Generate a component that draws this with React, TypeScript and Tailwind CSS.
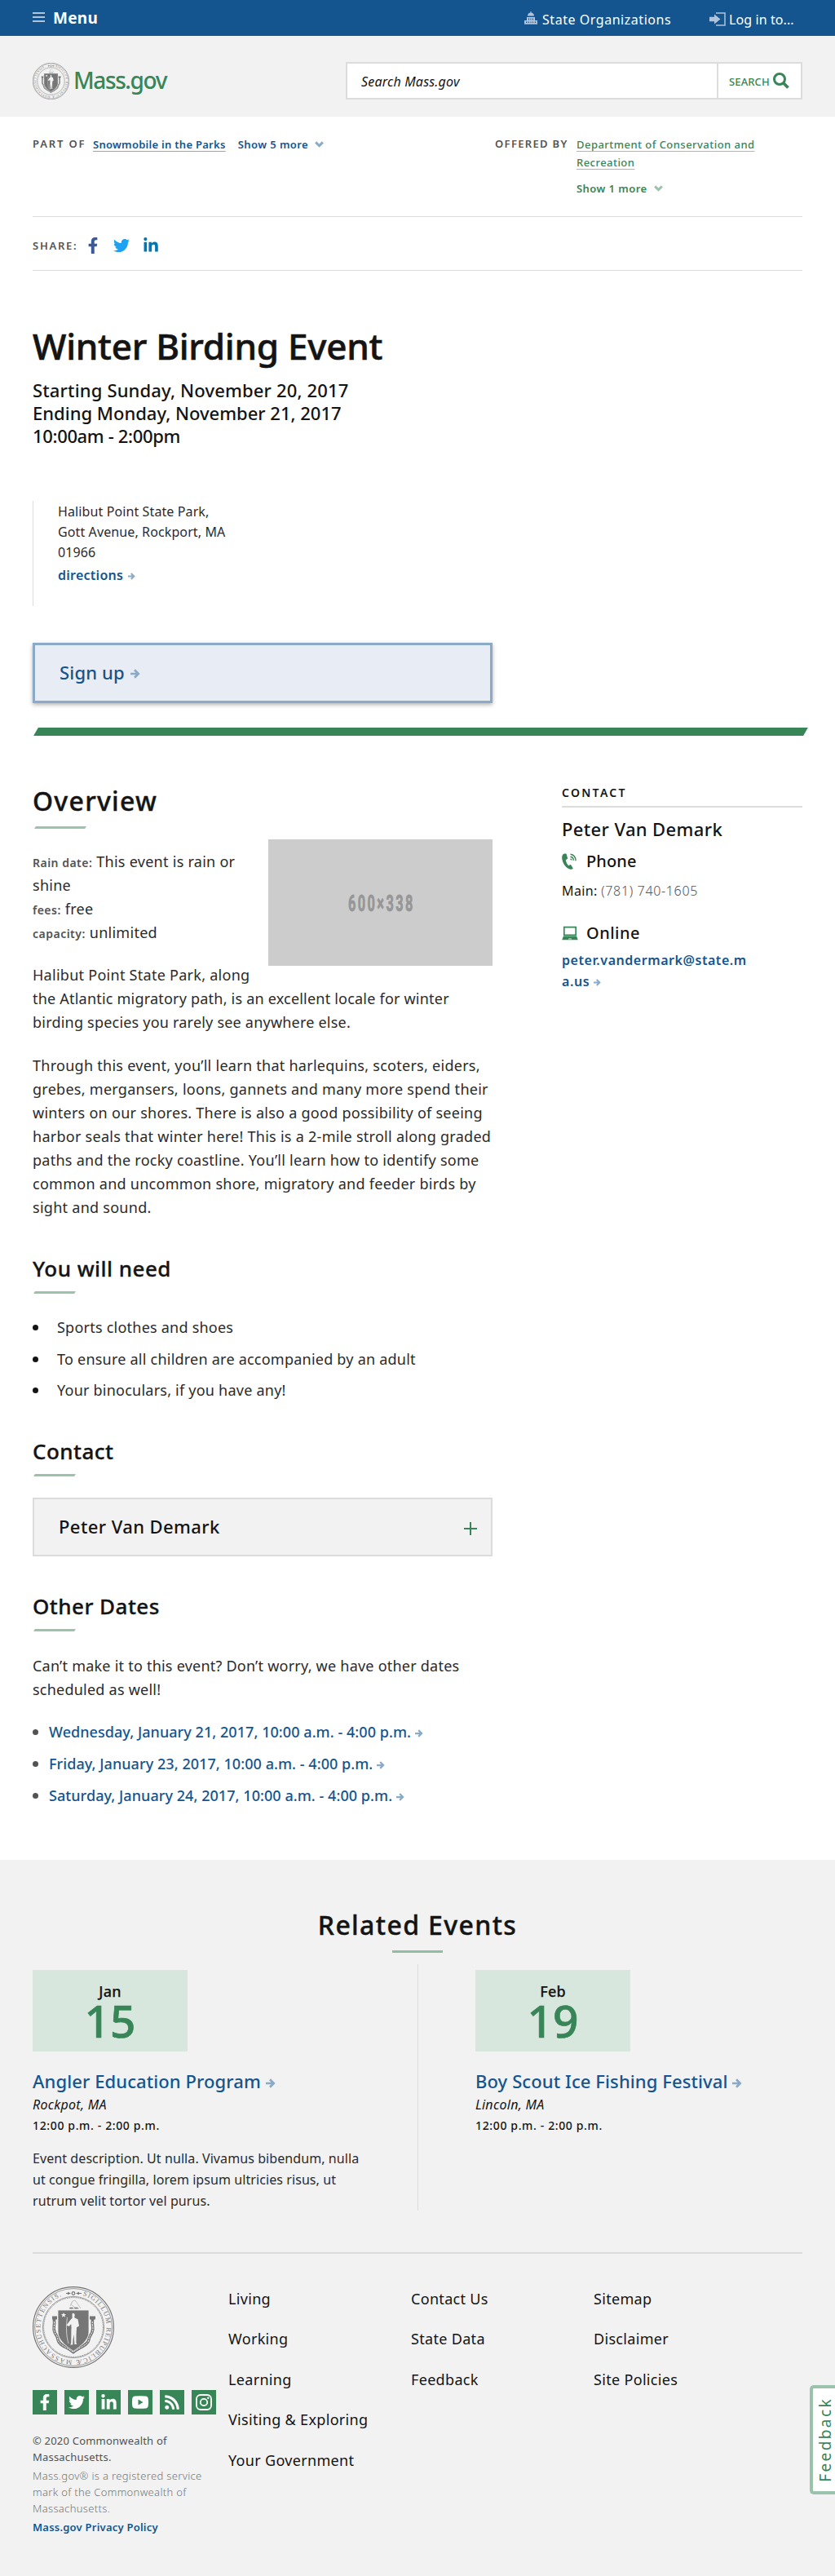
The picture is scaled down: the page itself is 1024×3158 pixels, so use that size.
import React, { useId } from "react";
import { FaFacebookF, FaTwitter, FaLinkedinIn, FaRss } from "react-icons/fa";

function Seal({ className }: { className: string }) {
  const id = useId();
  return (
    <svg viewBox="0 0 100 100" className={className} fill="none" stroke="#767676">
      <circle cx="50" cy="50" r="49.4" strokeWidth="1.2" />
      <circle cx="50" cy="50" r="47.4" strokeWidth="0.7" />
      <circle cx="50" cy="50" r="37.6" strokeWidth="0.7" />
      <circle cx="50" cy="50" r="36.4" strokeWidth="1" strokeDasharray="0.8 0.8" />
      <path id={id} d="M61.5 11 A40.6 40.6 0 1 1 41 10.4" stroke="none" />
      <text fill="#767676" stroke="none" fontSize="8.2" fontFamily="'Liberation Serif', serif">
        <textPath href={"#" + id} textLength="228" lengthAdjust="spacing">
          SIGILLUM REIPUBLICÆ MASSACHUSETTENSIS.
        </textPath>
      </text>
      <path d="M41 8.5h5M54 8.5h6" strokeWidth="1" />
      <path d="M43 6.8l4 1.7-4 1.7zM57 6.8l-4 1.7 4 1.7z" fill="#767676" stroke="none" />
      <circle cx="50" cy="8.5" r="1.8" strokeWidth="1.2" />
      <path d="M45 27h12M46 24l3-6 3-1 3 4 4 6M49 18l-2 4 5 4" stroke="#c4c4c4" strokeWidth="1" />
      <path d="M45.5 26.5h4M51.5 26.5h4" strokeWidth="1.4" />
      <path d="M26.500 37.500v4.500c.8 5-1.800 9 .4 14 1 3 4 5 4 9 1 7 11 9 19 15.500C58 74 68 72 69 65c0-4 3-6 4-9 2.200-5-.4-9 .4-14v-4.500" strokeWidth="3.600" />
      <path d="M24 38.500h6M70 38.500h7" strokeWidth="4" />
      <path d="M26.500 43c.8 5-1.800 9 .4 13 1 3 4 5 4 9 1 7 11 9 19 15.500C58 74 68 72 69 65c0-4 3-6 4-9 2.200-4-.4-8 .4-13" stroke="#f2f2f2" strokeWidth="1" strokeDasharray="2.500 1" />
      <path d="M31 29h38v27c0 10-10 17-19 23.500C41 73 31 66 31 56z" fill="#767676" stroke="#f2f2f2" strokeWidth="0.8" />
      <path d="M38 32l.9 2.100 2.200.1-1.700 1.400.6 2.200-2-1.200-2 1.200.6-2.200-1.700-1.400 2.200-.1z" fill="#f2f2f2" stroke="none" />
      <path d="M48.500 33.500c1-1.500 3-.5 3.200 1.300l-.5 3.500 4.300 2 1.500 8.200-3 1.800-.4 7.200-.2 12 1 1.500h-3l-.8-12-1 6-.4 6.500h-3l1-2 .2-16 .2-3-.4-4.500-2.600 3-3-1.500 5-6.800 2-2z" fill="#f2f2f2" stroke="none" />
      <path d="M42.500 38c-1.500 10-1.500 22 1.500 32" stroke="#f2f2f2" strokeWidth="0.7" />
    </svg>
  );
}

function Arrow({ className }: { className: string }) {
  return (
    <svg viewBox="0 0 12 12" className={"inline-block " + className} fill="none" stroke="currentColor" strokeWidth="2.700">
      <path d="M0 6h9.500M5 1.300L9.700 6 5 10.700" />
    </svg>
  );
}

function Chevron({ className }: { className: string }) {
  return (
    <svg viewBox="0 0 11 8" className={"inline-block h-2 w-[11px] " + className} fill="none" stroke="currentColor" strokeWidth="3">
      <path d="M1.200 1.400L5.500 5.700 9.800 1.400" />
    </svg>
  );
}

function Youtube() {
  return (
    <svg viewBox="0 0 20 16" className="h-4 w-5">
      <path fillRule="evenodd" fill="white" d="M3.500.5Q10-.2 16.500.5 19.500.8 19.800 4q.4 4 0 8-.3 3.200-3.300 3.500-6.500.7-13 0Q.5 15.200.2 12q-.4-4 0-8Q.5.8 3.500.5zM7.500 4.500v7l6-3.500z" />
    </svg>
  );
}

function Instagram() {
  return (
    <svg viewBox="0 0 20 20" className="size-5" fill="none" stroke="white" strokeWidth="1.800">
      <rect x="1" y="1" width="18" height="18" rx="5" />
      <circle cx="10" cy="10" r="4.200" />
      <circle cx="15.300" cy="4.700" r="1.200" fill="white" stroke="none" />
    </svg>
  );
}

function H3({ children }: { children: React.ReactNode }) {
  return (
    <>
      <h3 className="text-[26px] leading-[34px] font-medium tracking-[0.460px] [-webkit-text-stroke:0.300px_#141414]">{children}</h3>
      <div className="mt-[11px] ml-[2px] h-[3px] w-[50px] -skew-x-[30deg] bg-[#9bc2ab]" />
    </>
  );
}

const dates = [
  "Wednesday, January 21, 2017, 10:00 a.m. - 4:00 p.m.",
  "Friday, January 23, 2017, 10:00 a.m. - 4:00 p.m.",
  "Saturday, January 24, 2017, 10:00 a.m. - 4:00 p.m.",
];

const footerLinks = [
  ["Living", "Working", "Learning", "Visiting & Exploring", "Your Government"],
  ["Contact Us", "State Data", "Feedback"],
  ["Sitemap", "Disclaimer", "Site Policies"],
];

const socials = [
  <FaFacebookF className="size-5" />,
  <FaTwitter className="size-5" />,
  <FaLinkedinIn className="size-[21px]" />,
  <Youtube />,
  <FaRss className="size-5" />,
  <Instagram />,
];

function EventCard({ month, day, title, place, text }: { month: string; day: string; title: string; place: string; text?: string }) {
  return (
    <>
      <div className="h-[100px] w-[190px] bg-[#d7e7dd] pt-[14px] text-center">
        <div className="text-[18px] leading-6 font-medium tracking-[0.200px] [-webkit-text-stroke:0.250px_#141414]">{month}</div>
        <div className="text-[55px] leading-[48px] font-medium text-[#388557] [-webkit-text-stroke:0.700px_#388557]">{day}</div>
      </div>
      <h3 className="mt-[22px] text-[22px] leading-7 font-medium tracking-[0.100px] whitespace-nowrap text-[#14558f]">
        {title} <Arrow className="size-3 text-[#8aaac7]" />
      </h3>
      <div className="mt-[2px] text-[16px] leading-[26px] tracking-[0.290px] italic">{place}</div>
      <div className="text-[14px] leading-[26px] font-medium tracking-[0.640px]">12:00 p.m. - 2:00 p.m.</div>
      {text && <p className="mt-[14px] w-[410px] text-[16px] leading-[26px] tracking-[0.080px] text-[#2b2b2b]">{text}</p>}
    </>
  );
}

export default function App() {
  return (
    <div className="relative h-[3158px] w-[1024px] overflow-hidden bg-white font-['Noto_Sans',sans-serif] text-[#141414]">
      <header>
        <div className="flex h-11 items-center bg-[#14558f] px-10 text-white">
          <div className="mb-[2px] flex w-[15px] flex-col gap-[3px]">
            <span className="h-[2px] bg-[#afc4da]" />
            <span className="h-[2px] bg-[#afc4da]" />
            <span className="h-[2px] bg-[#afc4da]" />
          </div>
          <span className="mb-px ml-[10px] text-[19px] leading-6 font-bold tracking-[0.300px]">Menu</span>
          <svg viewBox="0 0 16 16" className="ml-auto size-4" fill="#afc4da">
            <path d="M7.500 0h1v1.400C11 1.700 12 3.500 12 5.500H4C4 3.500 5 1.700 7.500 1.400zM3 7h10v4h3v4.800H0V11h3z" />
            <path d="M5 8.500h1v2H5zM7.500 8.500h1v2h-1zM10 8.500h1v2h-1zM2 12.500h1.500v1.500H2zM5 12.500h1v1.500H5zM7.500 12.500h1v1.500h-1zM10 12.500h1v1.500h-1zM12.800 12.500h1.500v1.500h-1.500z" fill="#14558f" />
          </svg>
          <span className="mt-[3px] ml-[6px] w-[157px] text-[16px] leading-6 tracking-[0.540px] whitespace-nowrap">State Organizations</span>
          <svg viewBox="0 0 20 17" className="mt-[2px] ml-[48px] h-[17px] w-5">
            <path d="M8 1h11v15H8" fill="none" stroke="#afc4da" strokeWidth="1.500" />
            <path d="M0 5.800h6V2.500l7.500 6L6 14.500v-3.300H0z" fill="#afc4da" />
          </svg>
          <span className="mt-[3px] ml-[4px] w-[90px] text-[16px] leading-6 tracking-[0.100px] whitespace-nowrap">Log in to...</span>
        </div>
        <div className="flex h-[99px] items-center bg-[#f2f2f2] px-10">
          <Seal className="mt-3 size-[45px]" />
          <span className="mt-[9px] ml-[5px] text-[28px] leading-9 font-medium tracking-[-1.400px] text-[#388557]">Mass.gov</span>
          <div className="mt-[11px] ml-auto flex h-[46px] w-[560px] border-2 border-[#dcdcdc] bg-white">
            <span className="flex-1 pl-[17px] text-[16px] leading-[44px] tracking-[0.190px] italic">Search Mass.gov</span>
            <span className="flex items-center border-l-2 border-[#dcdcdc] pr-[14px] pl-[13px] text-[13px] font-medium tracking-[0.120px] text-[#388557]">
              <span className="mt-px w-[54px] leading-5">SEARCH</span>
              <svg viewBox="0 0 20 20" className="mb-px size-5" fill="none" stroke="#388557">
                <circle cx="8" cy="8" r="6.500" strokeWidth="3" />
                <path d="M12.500 12.500l6 6" strokeWidth="3.800" />
              </svg>
            </span>
          </div>
        </div>
      </header>

      <div className="px-10">
        <div className="flex h-[123px] items-start border-b border-[#dcdcdc] pt-[22px] text-[13px] leading-[22px] font-semibold">
          <span className="w-[74px] tracking-[1.840px] whitespace-nowrap text-[#535353]">PART OF</span>
          <span className="mt-px text-[#14558f]">
            <span className="mr-[15px] tracking-[0.280px] underline decoration-[#8aaac7] decoration-1 underline-offset-[3px] [text-decoration-skip-ink:none]">Snowmobile in the Parks</span>
            <span className="tracking-[0.440px]">Show 5 more</span>
            <Chevron className="mb-[2px] ml-2 text-[#8aaac7]" />
          </span>
          <span className="ml-auto w-[100px] tracking-[1.330px] whitespace-nowrap text-[#535353]">OFFERED BY</span>
          <div className="mt-px w-[277px] text-[#388557]">
            <div className="w-[240px] font-medium tracking-[0.460px] underline decoration-[#9bc2ab] decoration-1 underline-offset-[3px] [text-decoration-skip-ink:none]">Department of Conservation and Recreation</div>
            <div className="mt-[10px]">
              <span className="tracking-[0.440px]">Show 1 more</span>
              <Chevron className="mb-[2px] ml-2 text-[#9bc2ab]" />
            </div>
          </div>
        </div>
        <div className="flex h-[66px] items-center border-b border-[#dcdcdc]">
          <span className="mt-[5px] w-[66px] text-[13px] leading-[22px] font-semibold tracking-[1.730px] text-[#535353]">SHARE:</span>
          <FaFacebookF className="mt-1 h-5 w-4 text-[#3b5998]" />
          <FaTwitter className="mt-1 ml-[17px] size-5 text-[#1da1f2]" />
          <FaLinkedinIn className="mt-1 ml-4 size-5 text-[#0077b5]" />
        </div>

        <h1 className="mt-[64px] text-[44px] leading-[56px] font-medium tracking-[-0.260px] [-webkit-text-stroke:0.600px_#141414]">Winter Birding Event</h1>
        <div className="mt-3 text-[22px] leading-7 font-medium">
          <div className="tracking-[0.160px]">Starting Sunday, November 20, 2017</div>
          <div className="tracking-[0px]">Ending Monday, November 21, 2017</div>
          <div className="tracking-[-0.340px]">10:00am - 2:00pm</div>
        </div>
        <div className="mt-[66px] h-[129px] border-l border-[#dcdcdc] pt-px pl-[30px] text-[16px] leading-[25px] tracking-[0.110px] text-[#2b2b2b]">
          <div>Halibut Point State Park,</div>
          <div>Gott Avenue, Rockport, MA</div>
          <div>01966</div>
          <div className="mt-[3px] font-semibold tracking-[0.260px] text-[#14558f]">
            directions <Arrow className="ml-px size-[9px] text-[#8aaac7]" />
          </div>
        </div>
        <div className="mt-[45px] flex h-[74px] w-[564px] items-center border-[3px] border-[#8aaac7] bg-[#e8edf5] pb-[2px] pl-[30px] text-[22px] leading-7 font-medium tracking-[0.170px] text-[#14558f] shadow-[0_2px_5px_rgba(0,0,0,0.3)]">
          Sign up <Arrow className="mt-1 ml-[7px] size-3 text-[#8aaac7]" />
        </div>
      </div>

      <div className="mt-[30px] ml-11 h-[10px] w-[944px] -skew-x-[30deg] bg-[#388557]" />

      <div className="flex px-10 pt-[59px]">
        <main className="w-[564px]">
          <section className="h-[577px]">
            <h2 className="pt-px text-[32px] leading-[40px] font-medium tracking-[1.270px] [-webkit-text-stroke:0.400px_#141414]">Overview</h2>
            <div className="mt-[11px] ml-[3px] h-[3px] w-[62px] -skew-x-[30deg] bg-[#9bc2ab]" />
            <div className="mt-[13px] text-[18px] leading-[29px] tracking-[0.270px] text-[#2b2b2b]">
              <div className="float-right mb-2 ml-5 flex h-[155px] w-[275px] items-center justify-center bg-[#cccccc]">
                <svg viewBox="0 0 80 22" className="h-[22px] w-20">
                  <text x="0" y="21" fontFamily="Roboto, sans-serif" fontSize="28" fontWeight="700" fill="#969696" stroke="#969696" strokeWidth="0.8" textLength="137" lengthAdjust="spacing" transform="scale(0.580 1)">600×338</text>
                </svg>
              </div>
              <div className="pt-[13px]">
                <div className="w-[270px]">
                  <span className="text-[14px] leading-none font-semibold tracking-[0.490px] text-[#535353]">Rain date:</span> This event is rain or shine
                </div>
                <div><span className="text-[14px] leading-none font-semibold tracking-[0.490px] text-[#535353]">fees:</span> free</div>
                <div><span className="text-[14px] leading-none font-semibold tracking-[0.490px] text-[#535353]">capacity:</span> unlimited</div>
              </div>
              <p className="mt-[23px]">
                Halibut Point State Park, along
                <br />
                <span className="tracking-[0.210px]">the Atlantic migratory path, is an excellent locale for winter birding species you rarely see anywhere else.</span>
              </p>
              <p className="mt-6 -mr-2">
                Through this event, you’ll learn that harlequins, scoters, eiders,<br />
                grebes, mergansers, loons, gannets and many more spend their<br />
                winters on our shores. There is also a good possibility of seeing<br />
                harbor seals that winter here! This is a 2-mile stroll along graded<br />
                paths and the rocky coastline. You’ll learn how to identify some<br />
                common and uncommon shore, migratory and feeder birds by<br />
                sight and sound.
              </p>
            </div>
          </section>

          <section className="h-[224px]">
            <H3>You will need</H3>
            <ul className="mt-[27px] text-[18px] leading-[29px] tracking-[0.230px] text-[#2b2b2b]">
              {["Sports clothes and shoes", "To ensure all children are accompanied by an adult", "Your binoculars, if you have any!"].map((t) => (
                <li key={t} className="flex h-[38.700px] items-start">
                  <span className="mt-[11px] mr-[23px] size-[7px] rounded-full bg-[#141414]" />
                  {t}
                </li>
              ))}
            </ul>
          </section>

          <section className="h-[190px]">
            <H3>Contact</H3>
            <div className="mt-[26px] flex h-[72px] items-center justify-between border-2 border-[#dcdcdc] bg-[#f2f2f2] pr-[17px] pl-[30px]">
              <span className="mb-[2px] text-[22px] leading-7 font-medium tracking-[0.420px]">Peter Van Demark</span>
              <svg viewBox="0 0 16 16" className="mt-1 size-4" stroke="#388557" strokeWidth="2">
                <path d="M8 0v16M0 8h16" />
              </svg>
            </div>
          </section>

          <section className="h-[328px]">
            <H3>Other Dates</H3>
            <p className="mt-[28px] text-[18px] leading-[29px] tracking-[0.230px] text-[#2b2b2b]">Can’t make it to this event? Don’t worry, we have other dates scheduled as well!</p>
            <ul className="mt-[23px] text-[18px] leading-[29px] font-medium tracking-[0.060px] text-[#14558f]">
              {dates.map((t) => (
                <li key={t} className="flex h-[39px] items-start">
                  <span className="mt-[11px] mr-[13px] size-[7px] rounded-full bg-[#535353]" />
                  {t}
                  <Arrow className="mt-[11px] ml-[5px] size-[10px] text-[#8aaac7]" />
                </li>
              ))}
            </ul>
          </section>
        </main>

        <aside className="ml-[85px] w-[295px]">
          <div className="h-[29px] border-b-2 border-[#dcdcdc] pt-px text-[14px] leading-5 font-semibold tracking-[2.280px]">CONTACT</div>
          <div className="mt-3 text-[22px] leading-7 font-medium tracking-[0.380px]">Peter Van Demark</div>
          <div className="mt-3 flex h-7 items-center text-[20px] leading-7 font-medium tracking-[0.130px]">
            <svg viewBox="0 0 18 20" className="mr-3 h-5 w-[18px]" fill="none" stroke="#388557">
              <path d="M3.200.5C1 .8-.2 3.500.3 7c.8 5.500 4.500 11 9.500 12.600 1.500.5 3.200.1 4-1.200l-3-4.600-2.600 1.400C6.500 13.500 5.300 11 4.800 8.200l2.400-1.700L5.600.8C5 .3 4 .3 3.200.5z" fill="#388557" stroke="none" />
              <path d="M10.500 1.200c4 .3 6.700 3.800 6.500 8M10.500 4.200c2.300.3 3.800 2.200 3.700 4.600M10.500 7c.8.200 1.200.8 1.200 1.500" strokeWidth="1.500" />
            </svg>
            Phone
          </div>
          <div className="mt-[9px] text-[16px] leading-[26px] tracking-[0.370px]">
            Main: <span className="font-light tracking-[0.660px] text-[#535353]">(781) 740-1605</span>
          </div>
          <div className="mt-[25px] flex h-7 items-center text-[20px] leading-7 font-medium tracking-[0.490px]">
            <svg viewBox="0 0 20 18" className="mr-[10px] h-[18px] w-5">
              <path d="M2.800 1.700h14.400v9.600H2.800z" fill="none" stroke="#388557" strokeWidth="1.700" />
              <path d="M2 12.500h16l1.800 4.800H.2z" fill="#388557" />
              <path d="M8 16h4" stroke="#d7e7dd" />
            </svg>
            Online
          </div>
          <div className="mt-[6px] text-[16px] leading-[26px] font-semibold tracking-[0.550px] text-[#14558f]">
            peter.vandermark@state.m
            <br />
            a.us <Arrow className="size-[9px] text-[#8aaac7]" />
          </div>
        </aside>
      </div>

      <div className="h-[878px] bg-[#f2f2f2] px-10 pt-[60px]">
        <h2 className="text-center text-[32px] leading-[40px] font-medium tracking-[1.370px] [-webkit-text-stroke:0.400px_#141414]">Related Events</h2>
        <div className="mx-auto mt-[11px] h-[3px] w-[62px] bg-[#90bea3]" />
        <div className="mt-[14px] flex h-[302px]">
          <div className="w-[472px] pt-[7px]">
            <EventCard month="Jan" day="15" title="Angler Education Program" place="Rockpot, MA" text="Event description. Ut nulla. Vivamus bibendum, nulla ut congue fringilla, lorem ipsum ultricies risus, ut rutrum velit tortor vel purus." />
          </div>
          <div className="w-[472px] border-l border-[#dcdcdc] pt-[7px] pl-[70px]">
            <EventCard month="Feb" day="19" title="Boy Scout Ice Fishing Festival" place="Lincoln, MA" />
          </div>
        </div>
        <footer className="mt-[51px] flex border-t-2 border-[#dcdcdc]">
          <div className="w-[240px] pt-10">
            <Seal className="size-[100px]" />
            <div className="mt-[27px] flex gap-[9px]">
              {socials.map((s, i) => (
                <span key={i} className="flex size-[30px] items-center justify-center bg-[#388557] text-white">{s}</span>
              ))}
            </div>
            <div className="mt-[22px] w-[215px] text-[13px] leading-5">
              <p className="tracking-[0.200px] text-[#535353]">© 2020 Commonwealth of Massachusetts.</p>
              <p className="mt-[3px] font-light tracking-[0.330px] text-[#767676]">Mass.gov® is a registered service mark of the Commonwealth of Massachusetts.</p>
              <p className="mt-[3px] font-semibold tracking-[0.230px] text-[#14558f]">Mass.gov Privacy Policy</p>
            </div>
          </div>
          {footerLinks.map((col, i) => (
            <div key={i} className="w-56 pt-[31px] text-[18px] leading-[49.400px] tracking-[0.320px]">
              {col.map((t) => (
                <div key={t}>{t}</div>
              ))}
            </div>
          ))}
        </footer>
      </div>

      <div className="absolute top-[2924px] right-0 flex h-[134px] w-[31px] items-center justify-center rounded-l-[5px] border-4 border-r-0 border-[#9bc2ab] bg-white">
        <span className="ml-[2px] rotate-180 text-[19px] leading-5 tracking-[2.400px] text-[#388557] [writing-mode:vertical-rl]">Feedback</span>
      </div>
    </div>
  );
}
